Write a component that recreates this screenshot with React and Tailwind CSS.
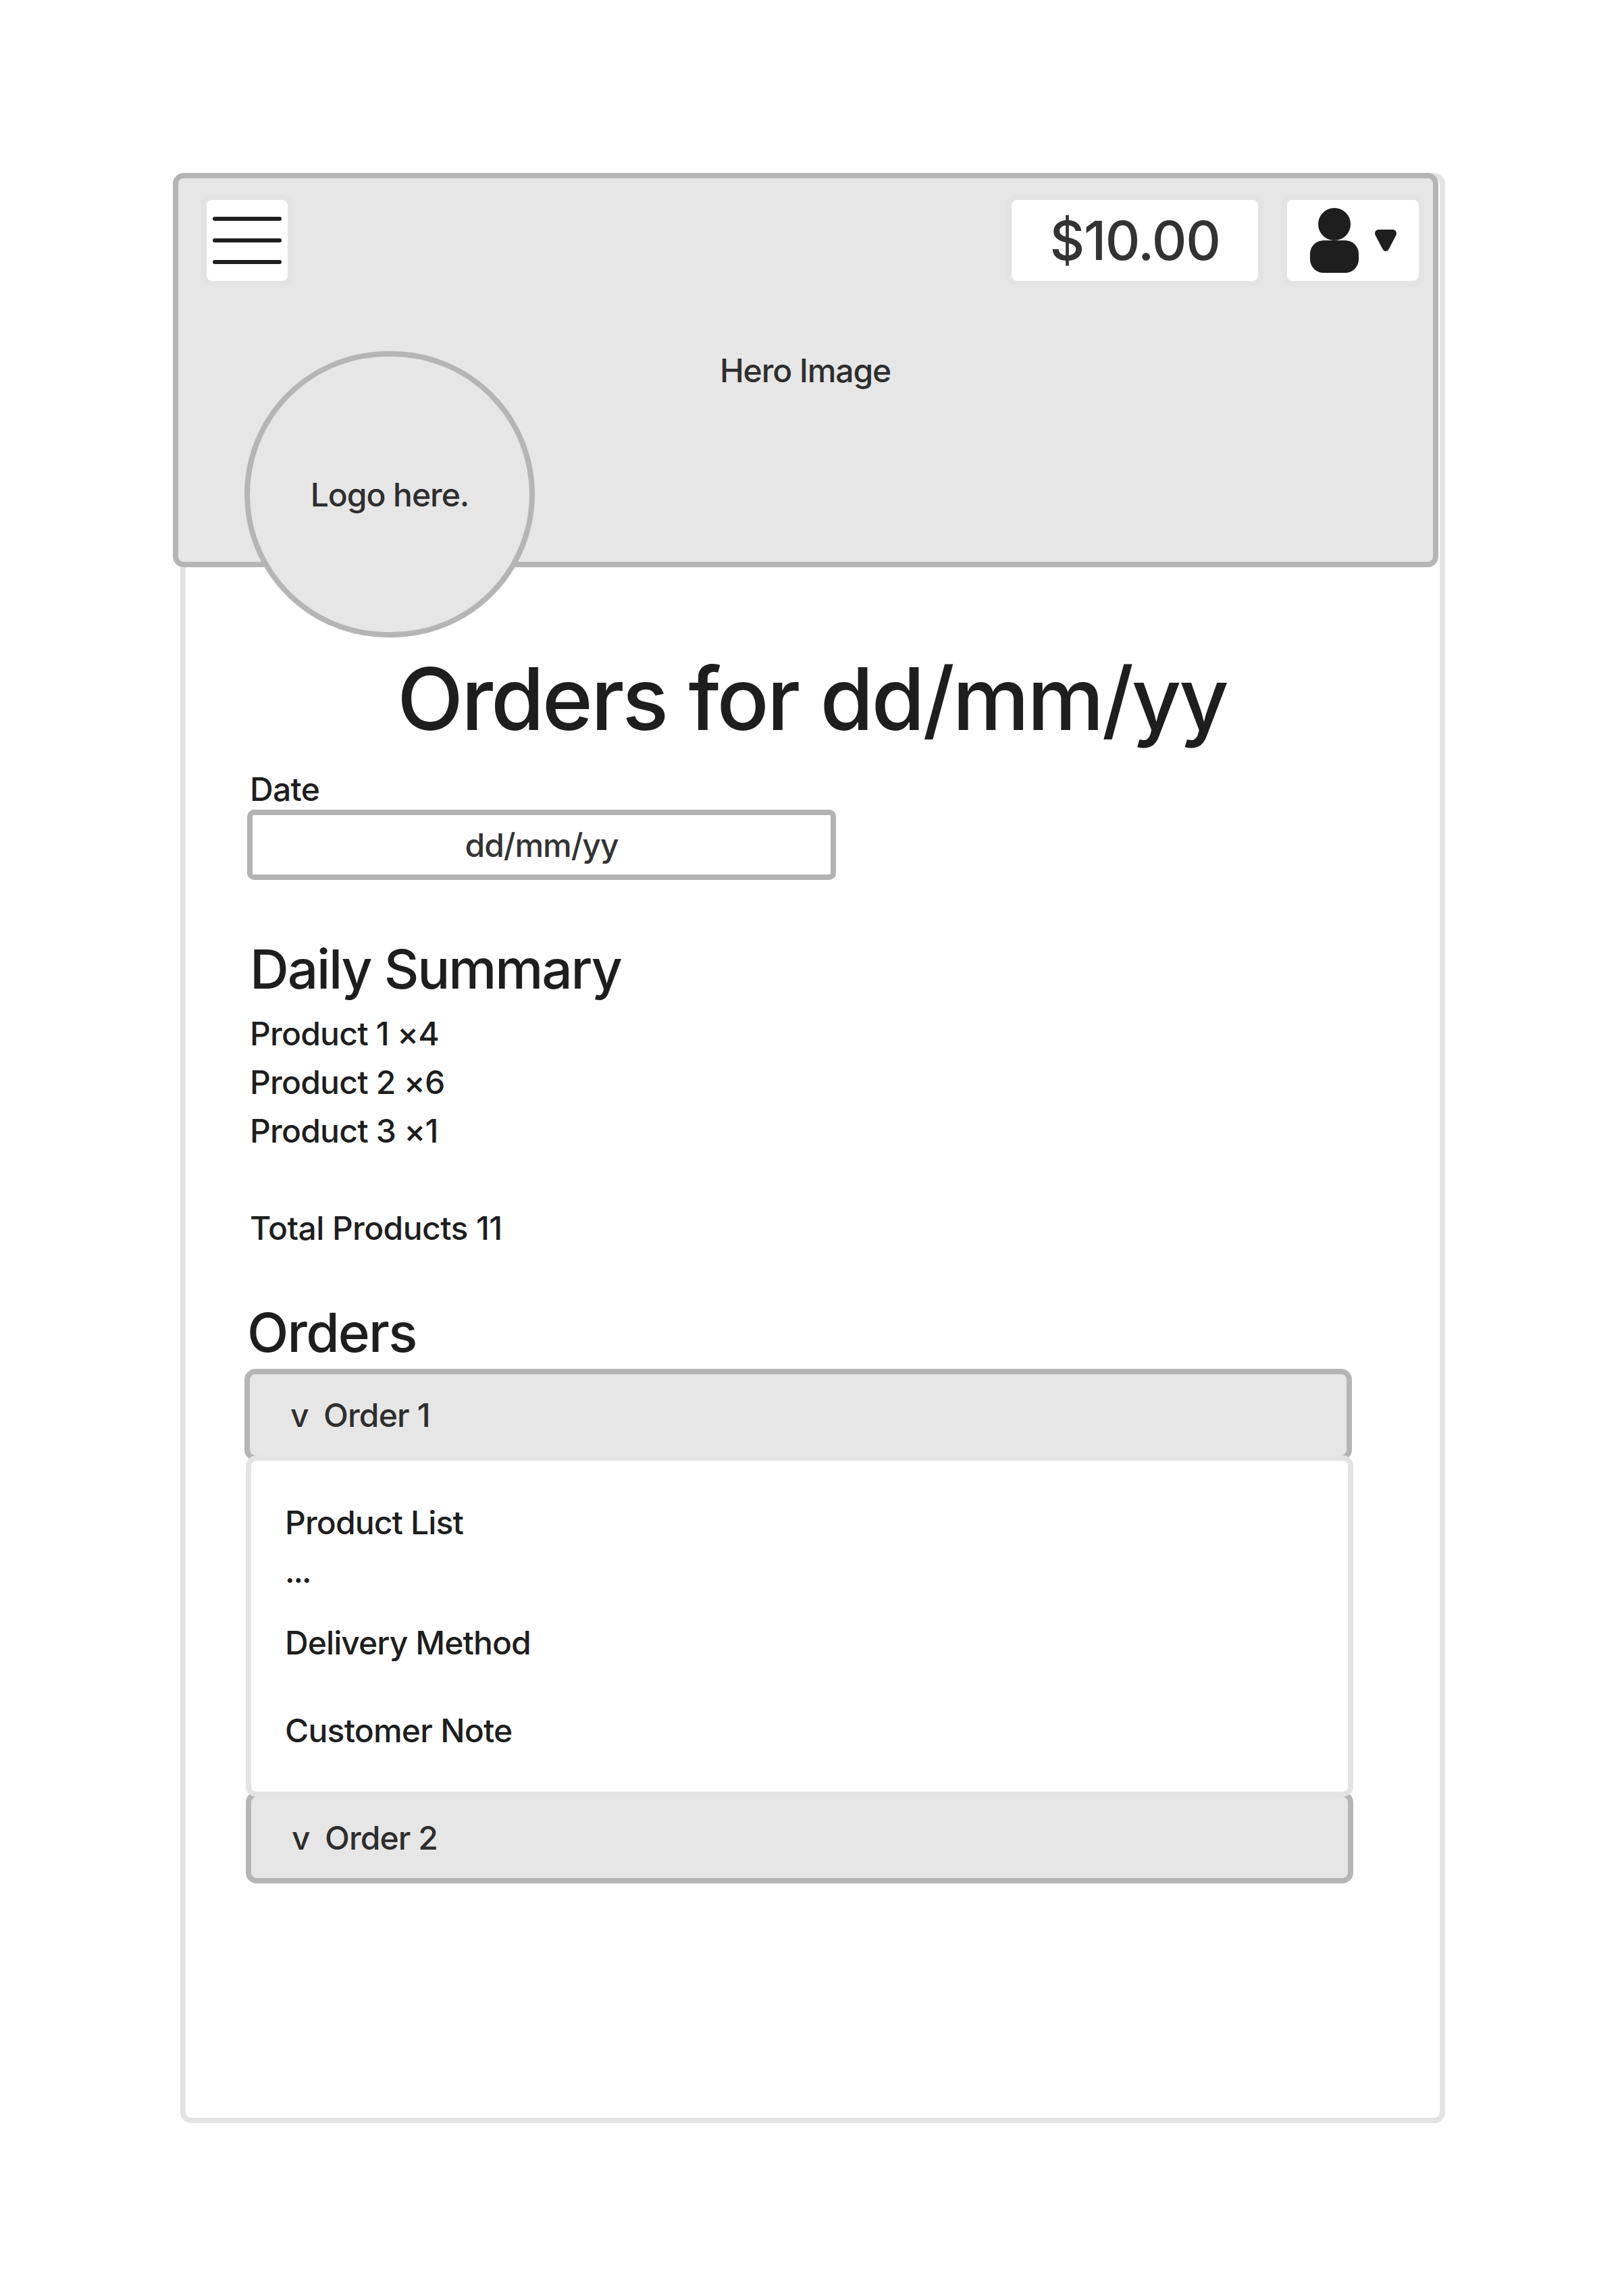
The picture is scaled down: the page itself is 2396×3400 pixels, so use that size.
import React from "react";

function Navigation() {
  return (
    <nav className="flex items-start">
      <button
        aria-label="Menu"
        className="flex h-[136px] w-[136px] flex-col items-center justify-center gap-[26px] rounded-[16px] border-8 border-[#e3e3e3] bg-white"
      >
        <span className="h-1.5 w-[102px] rounded-full bg-[#1e1e1e]" />
        <span className="h-1.5 w-[102px] rounded-full bg-[#1e1e1e]" />
        <span className="h-1.5 w-[102px] rounded-full bg-[#1e1e1e]" />
      </button>
      <div className="ml-auto flex h-[136px] w-[381px] items-center justify-center rounded-[16px] border-8 border-[#e3e3e3] bg-white text-[80px] leading-[120px] tracking-[-1.3px] text-[#333333]">
        $10.00
      </div>
      <button
        aria-label="Account"
        className="ml-[27px] flex h-[136px] w-[211px] items-center rounded-[16px] border-8 border-[#e3e3e3] bg-white pl-[34px]"
      >
        <span className="flex flex-col items-center">
          <span className="h-12 w-12 rounded-full bg-[#1e1e1e]" />
          <span className="h-12 w-[72px] rounded-[20px] bg-[#1e1e1e]" />
        </span>
        <svg className="ml-6" width="32" height="32" viewBox="0 0 32 32">
          <path
            d="M6 0H26C30.5 0 33 3.5 31.500 8L20.500 29C18.500 33 13.500 33 11.500 29L.5 8C-1 3.500 1.500 0 6 0Z"
            fill="#1e1e1e"
          />
        </svg>
      </button>
    </nav>
  );
}

function Hero() {
  return (
    <header className="relative -ml-[19px] -mt-2 h-[584px] w-[1874px] rounded-[16px] border-8 border-[#b5b5b5] bg-[#e6e6e6] pl-[34px] pr-[13px] pt-6">
      <Navigation />
      <p className="ml-[768px] mt-[89px] leading-[72px] tracking-[-1.12px] text-[#2e2e2e]">
        Hero Image
      </p>
      <div className="absolute left-[98px] top-[256px] flex h-[424px] w-[430px] items-center justify-center rounded-full border-8 border-[#b5b5b5] bg-[#e6e6e6] pt-0.5 leading-[72px] tracking-[-1.05px] text-[#2e2e2e]">
        Logo here.
      </div>
    </header>
  );
}

export default function App() {
  return (
    <div className="flow-root h-[3400px] w-[2396px] bg-white font-['Inter',sans-serif] text-[48px] font-medium leading-[72px] text-[#1e1e1e]">
      <div className="ml-[267px] mt-[256px] flex h-[2888px] w-[1873px] flex-col rounded-[16px] border-8 border-[#e3e3e3] bg-white">
        <Hero />
        <main className="flex flex-col items-start pl-[95px]">
          <h1 className="ml-[218px] mt-[115px] text-[128px] leading-[160px] tracking-[-3.15px] [word-spacing:1.5px]">
            Orders for dd/mm/yy
          </h1>

          <label className="mt-[18px] tracking-[-0.7px]">Date</label>
          <div className="-ml-1 mt-[-6px] flex h-[104px] w-[872px] items-center justify-center rounded-[10px] border-8 border-[#b3b3b3] bg-white pt-0.5 leading-[72px] tracking-[-1.05px] text-[#333333]">
            dd/mm/yy
          </div>

          <h2 className="mt-[72px] text-[80px] leading-[120px] tracking-[-2.1px]">
            Daily Summary
          </h2>
          <ul className="tracking-[-0.75px]">
            <li>Product 1 ×4</li>
            <li>Product 2 ×6</li>
            <li>Product 3 ×1</li>
          </ul>
          <p className="mt-[72px] tracking-[-0.57px]">Total Products 11</p>

          <h2 className="-ml-1 mt-[58px] text-[80px] leading-[120px] tracking-[-1.8px]">
            Orders
          </h2>
          <div className="-ml-2 mt-[-6px] flex h-[136px] w-[1640px] items-center rounded-[16px] border-8 border-[#b5b5b5] bg-[#e6e6e6] pl-[60px] pt-0.5 tracking-[-0.8px] text-[#2e2e2e]">
            <span className="w-[49px]">v</span>
            <span>Order 1</span>
          </div>
          <section className="z-10 -ml-1.5 -mt-2 h-[506px] w-[1640px] rounded-[16px] border-8 border-[#e3e3e3] bg-white pl-[50px] pt-14">
            <p className="tracking-[-0.85px]">Product List</p>
            <p className="tracking-[-2px]">...</p>
            <p className="mt-[34px] tracking-[-0.92px]">Delivery Method</p>
            <p className="mt-[58px] tracking-[-0.76px]">Customer Note</p>
          </section>
          <div className="-ml-1.5 -mt-2 flex h-[136px] w-[1640px] items-center rounded-[16px] border-8 border-[#b5b5b5] bg-[#e6e6e6] pl-[60px] pt-0.5 tracking-[-0.9px] text-[#2e2e2e]">
            <span className="w-[49px]">v</span>
            <span>Order 2</span>
          </div>
        </main>
      </div>
    </div>
  );
}
